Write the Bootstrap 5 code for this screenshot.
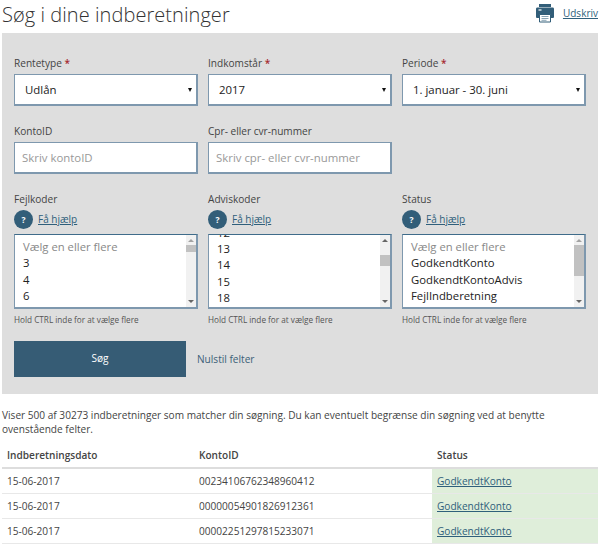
<!DOCTYPE html>
<html lang="da">
<head>
<meta charset="utf-8">
<title>Søg i dine indberetninger</title>
<link href="https://cdn.jsdelivr.net/npm/bootstrap@5.3.0/dist/css/bootstrap.min.css" rel="stylesheet">
<style>
html,body{height:544px;overflow:hidden}
body{font-family:"Open Sans","Liberation Sans",sans-serif;font-size:10.1px;color:#3c3c3c;background:#fff;line-height:14px}
.sheet{padding:0 2px}
.top-head{height:33px}
.page-title{font-size:20px;font-weight:300;line-height:30px;margin:0;color:#333;letter-spacing:.06px}
.print-link{font-size:10px;color:#2f5f7b;padding-top:3px}
.print-link a,.help-link,.state-link{color:#2f5f7b}
.search-panel{background:#dedede;height:361px;padding:23px 12px 0}
.field-grid{display:grid;grid-template-columns:repeat(3,184px);column-gap:10px}
.fld-label{display:block;font-size:10.1px;line-height:14px;margin:0 0 5px;color:#444;height:13px}
.fld-label.tight{margin-bottom:4px}
.req{color:#a5292e;font-weight:600}
.form-select.box-sel,.form-control.box-in{height:32px;border:2px solid #7e98ae;border-width:1px 2px 2px 1px;border-color:#7e98ae;border-radius:0;font-size:11.4px;color:#222;line-height:16px;box-shadow:none}
.form-select.box-sel{padding:0 14px 0 10px;background-image:url("data:image/svg+xml,%3Csvg xmlns='http://www.w3.org/2000/svg' width='4' height='4'%3E%3Cpath d='M0 0h4L2 4z' fill='%23111'/%3E%3C/svg%3E");background-size:4px 4px;background-position:right 4px center}
.form-control.box-in{padding:0 7px;color:#888}
.form-control.box-in::placeholder{color:#999;opacity:1}
.row-one{margin-bottom:18px}
.row-two{margin-bottom:18px}
.help-row{height:20px;margin:0 0 5px;gap:5px}
.help-dot{width:19px;height:19px;border-radius:50%;background:#325e79;color:#fff;font-size:8.5px;font-weight:700;line-height:19px;text-align:center}
.help-link{font-size:10px}
.list-wrap{position:relative;height:75px}
.multi-box{height:75px;width:184px;border:1px solid #7e98ae;border-width:1px 2px 2px 1px;border-top-color:#3f6c8a;border-radius:0;padding:4px 0 0 8px;font-size:11.3px;line-height:16.3px;color:#222;font-family:inherit;background:#fff;outline:0;display:block}
.multi-box option{padding:0;min-height:16.3px;line-height:16.3px}
.multi-box option.ph{color:#888}
.fake-bar{position:absolute;top:1px;right:2px;bottom:2px;width:10px;background:#f1f1f1;pointer-events:none}
.fake-thumb{position:absolute;left:0;width:100%;background:#c1c1c1}
.fake-up,.fake-down{position:absolute;left:2px;border-left:3px solid transparent;border-right:3px solid transparent}
.fake-up{top:4px;border-bottom:3px solid #a3a3a3}
.fake-up.live{border-bottom-color:#666}
.fake-down{bottom:4px;border-top:3px solid #666}
.hint{font-size:8.2px;line-height:12px;margin:5px 0 0;color:#555}
.act-row{margin-top:15px;gap:11px}
.btn.go-btn{width:172px;height:36px;background:#365c75;border:0;border-radius:0;color:#fff;font-size:10.1px;padding:0}
.reset-link{font-size:10.1px;color:#3c6078;text-decoration:none}
.intro{margin:14px 0 0;font-size:10.1px;line-height:14px;color:#444;width:590px}
.res-table{margin:7px 0 0;width:596px;table-layout:fixed;font-size:10.1px;color:#444}
.res-table th,.res-table td{padding:0 0 0 5px;vertical-align:middle;box-shadow:none;background:transparent;color:#444}
.res-table th{height:25px;font-weight:600;border-bottom:2px solid #ddd}
.res-table td{height:25px;border-bottom:1px solid #e8e8e8}
.res-table td.ok-cell{background:#dfeeda}
.state-link{font-size:10.1px}
</style>
</head>
<body>
<div class="sheet">
  <div class="top-head d-flex justify-content-between align-items-start">
    <h1 class="page-title">Søg i dine indberetninger</h1>
    <div class="print-link d-flex align-items-center gap-2">
      <svg width="20" height="20" viewBox="0 0 20 20" aria-hidden="true"><path d="M4 1h12v3H4z" fill="#325e79"/><path d="M2 4.500h16a1.500 1.500 0 0 1 1 1.500v8a1 1 0 0 1-1 1h-2v-3H4v3H2a1 1 0 0 1-1-1V6a1.500 1.500 0 0 1 1-1.500z" fill="#325e79"/><path d="M4.500 11.500h11V19h-11z" fill="#fff" stroke="#325e79"/><path d="M6.500 13.500h7M6.500 15.500h7M6.500 17.300h5" stroke="#7d9aac" stroke-width=".9"/><path d="M3.500 7h3" stroke="#fff" stroke-width="1.200"/></svg>
      <a href="#">Udskriv</a>
    </div>
  </div>
  <form class="search-panel">
    <div class="field-grid row-one">
      <div><label class="fld-label" for="f1">Rentetype <span class="req">*</span></label><select id="f1" class="form-select box-sel"><option>Udlån</option></select></div>
      <div><label class="fld-label" for="f2">Indkomstår <span class="req">*</span></label><select id="f2" class="form-select box-sel"><option>2017</option></select></div>
      <div><label class="fld-label" for="f3">Periode <span class="req">*</span></label><select id="f3" class="form-select box-sel"><option>1. januar - 30. juni</option></select></div>
    </div>
    <div class="field-grid row-two">
      <div><label class="fld-label" for="f4">KontoID</label><input id="f4" class="form-control box-in" placeholder="Skriv kontoID"></div>
      <div><label class="fld-label" for="f5">Cpr- eller cvr-nummer</label><input id="f5" class="form-control box-in" placeholder="Skriv cpr- eller cvr-nummer"></div>
    </div>
    <div class="field-grid">
      <div>
        <label class="fld-label tight" for="f6">Fejlkoder</label>
        <div class="help-row d-flex align-items-center"><span class="help-dot">?</span><a class="help-link" href="#">Få hjælp</a></div>
        <div class="list-wrap">
          <select id="f6" class="multi-box" multiple><option class="ph">Vælg en eller flere</option><option>3</option><option>4</option><option>6</option><option>7</option><option>8</option><option>9</option><option>10</option></select>
          <div class="fake-bar" aria-hidden="true"><span class="fake-up"></span><span class="fake-thumb" style="top:10px;height:7px"></span><span class="fake-down"></span></div>
        </div>
        <p class="hint">Hold CTRL inde for at vælge flere</p>
      </div>
      <div>
        <label class="fld-label tight" for="f7">Adviskoder</label>
        <div class="help-row d-flex align-items-center"><span class="help-dot">?</span><a class="help-link" href="#">Få hjælp</a></div>
        <div class="list-wrap">
          <select id="f7" class="multi-box" multiple><option class="ph">Vælg en eller flere</option><option>3</option><option>4</option><option>6</option><option>7</option><option>8</option><option>9</option><option>10</option><option>11</option><option>12</option><option>13</option><option>14</option><option>15</option><option>18</option><option>19</option><option>20</option><option>21</option><option>22</option></select>
          <div class="fake-bar" aria-hidden="true"><span class="fake-up live"></span><span class="fake-thumb" style="top:20px;height:11px"></span><span class="fake-down"></span></div>
        </div>
        <p class="hint">Hold CTRL inde for at vælge flere</p>
      </div>
      <div>
        <label class="fld-label tight" for="f8">Status</label>
        <div class="help-row d-flex align-items-center"><span class="help-dot">?</span><a class="help-link" href="#">Få hjælp</a></div>
        <div class="list-wrap">
          <select id="f8" class="multi-box" multiple><option class="ph">Vælg en eller flere</option><option>GodkendtKonto</option><option>GodkendtKontoAdvis</option><option>FejlIndberetning</option><option>Afvist</option><option>Slettet</option></select>
          <div class="fake-bar" aria-hidden="true"><span class="fake-up"></span><span class="fake-thumb" style="top:10px;height:31px"></span><span class="fake-down"></span></div>
        </div>
        <p class="hint">Hold CTRL inde for at vælge flere</p>
      </div>
    </div>
    <div class="act-row d-flex align-items-center">
      <button type="button" class="btn go-btn">Søg</button>
      <a class="reset-link" href="#">Nulstil felter</a>
    </div>
  </form>
  <p class="intro">Viser 500 af 30273 indberetninger som matcher din søgning. Du kan eventuelt begrænse din søgning ved at benytte ovenstående felter.</p>
  <table class="table res-table">
    <colgroup><col style="width:192px"><col style="width:238px"><col></colgroup>
    <thead><tr><th>Indberetningsdato</th><th>KontoID</th><th>Status</th></tr></thead>
    <tbody>
      <tr><td>15-06-2017</td><td>00234106762348960412</td><td class="ok-cell"><a class="state-link" href="#">GodkendtKonto</a></td></tr>
      <tr><td>15-06-2017</td><td>00000054901826912361</td><td class="ok-cell"><a class="state-link" href="#">GodkendtKonto</a></td></tr>
      <tr><td>15-06-2017</td><td>00002251297815233071</td><td class="ok-cell"><a class="state-link" href="#">GodkendtKonto</a></td></tr>
    </tbody>
  </table>
</div>
<script src="https://cdn.jsdelivr.net/npm/bootstrap@5.3.0/dist/js/bootstrap.bundle.min.js"></script>
<script>document.getElementById('f7').scrollTop=161;</script>
</body>
</html>
